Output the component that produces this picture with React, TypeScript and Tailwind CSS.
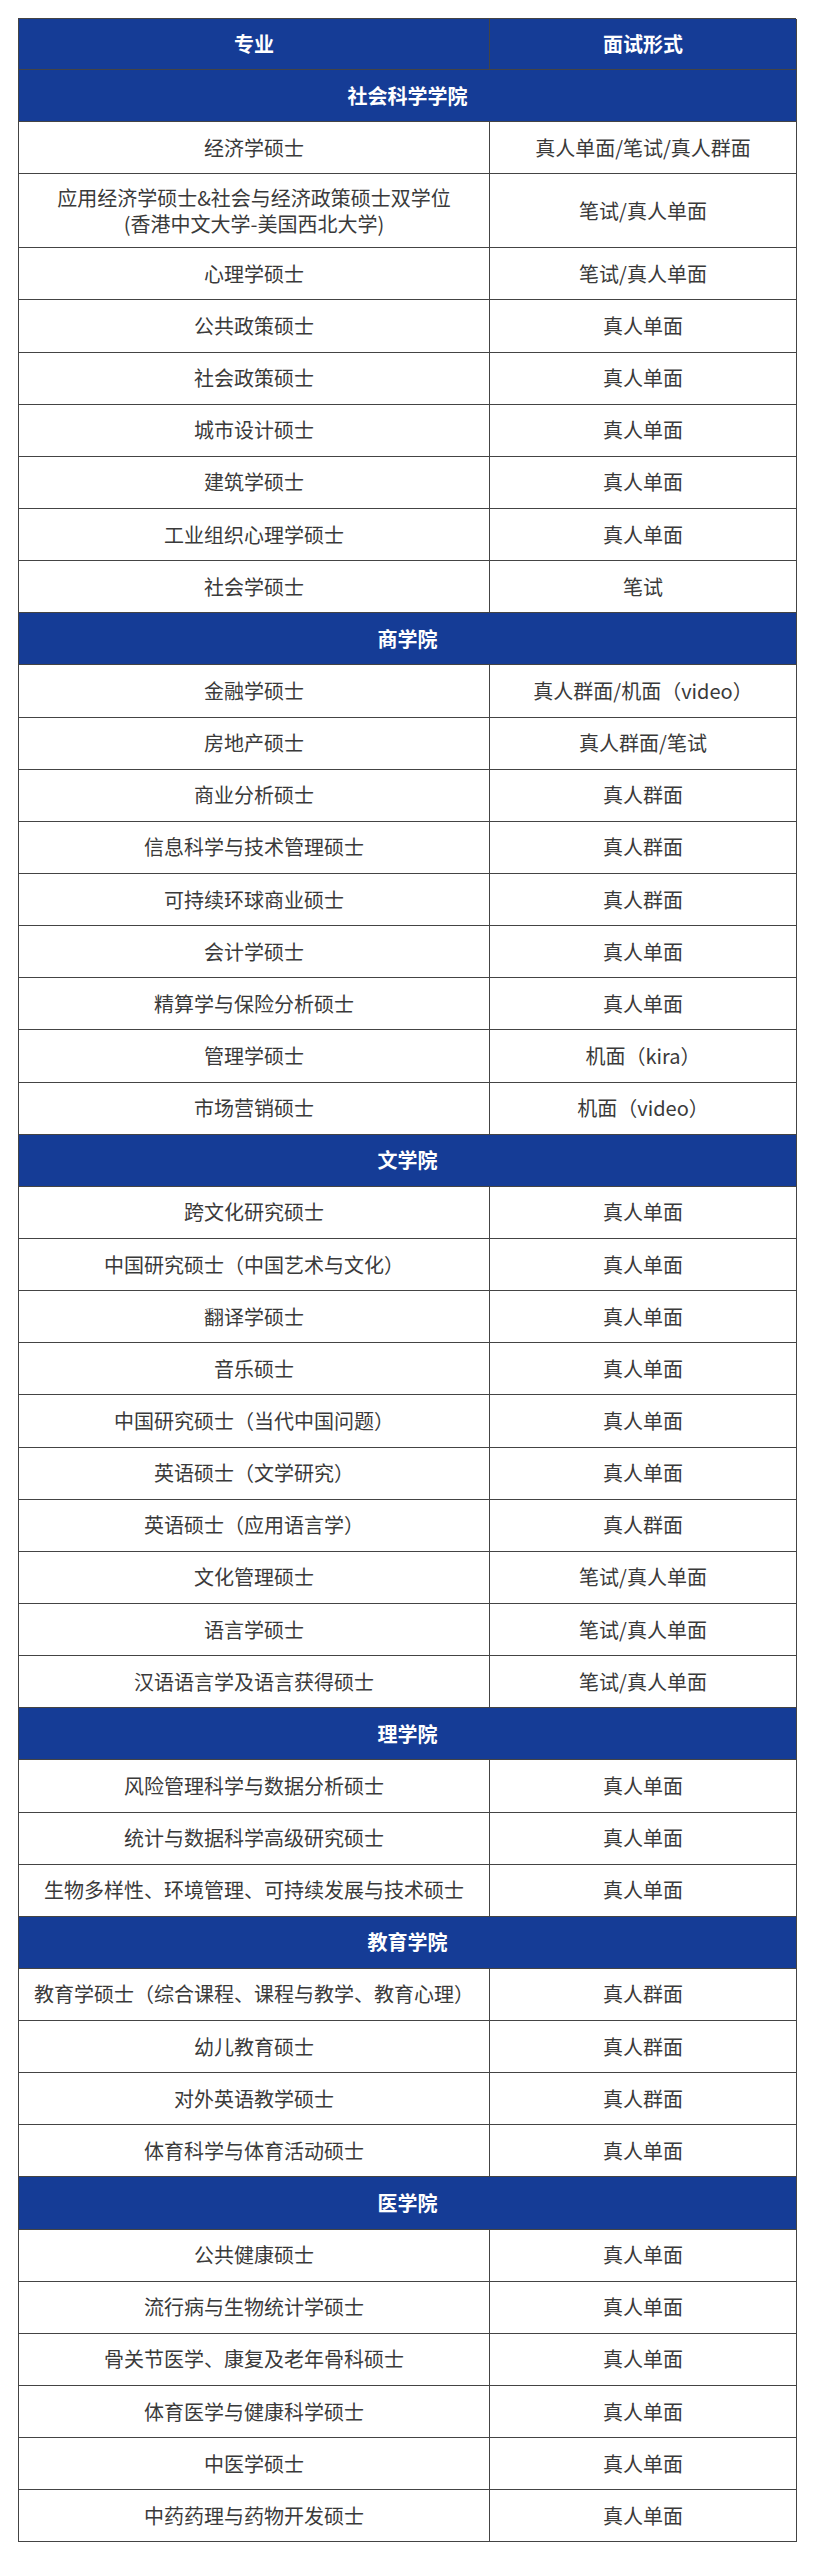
type Row = { major: string; format: string; sub?: string };
type Section = { school: string; rows: Row[] };

const sections: Section[] = [
  {
    school: "社会科学学院",
    rows: [
      { major: "经济学硕士", format: "真人单面/笔试/真人群面" },
      {
        major: "应用经济学硕士&社会与经济政策硕士双学位",
        sub: "(香港中文大学-美国西北大学)",
        format: "笔试/真人单面",
      },
      { major: "心理学硕士", format: "笔试/真人单面" },
      { major: "公共政策硕士", format: "真人单面" },
      { major: "社会政策硕士", format: "真人单面" },
      { major: "城市设计硕士", format: "真人单面" },
      { major: "建筑学硕士", format: "真人单面" },
      { major: "工业组织心理学硕士", format: "真人单面" },
      { major: "社会学硕士", format: "笔试" },
    ],
  },
  {
    school: "商学院",
    rows: [
      { major: "金融学硕士", format: "真人群面/机面（video）" },
      { major: "房地产硕士", format: "真人群面/笔试" },
      { major: "商业分析硕士", format: "真人群面" },
      { major: "信息科学与技术管理硕士", format: "真人群面" },
      { major: "可持续环球商业硕士", format: "真人群面" },
      { major: "会计学硕士", format: "真人单面" },
      { major: "精算学与保险分析硕士", format: "真人单面" },
      { major: "管理学硕士", format: "机面（kira）" },
      { major: "市场营销硕士", format: "机面（video）" },
    ],
  },
  {
    school: "文学院",
    rows: [
      { major: "跨文化研究硕士", format: "真人单面" },
      { major: "中国研究硕士（中国艺术与文化）", format: "真人单面" },
      { major: "翻译学硕士", format: "真人单面" },
      { major: "音乐硕士", format: "真人单面" },
      { major: "中国研究硕士（当代中国问题）", format: "真人单面" },
      { major: "英语硕士（文学研究）", format: "真人单面" },
      { major: "英语硕士（应用语言学）", format: "真人群面" },
      { major: "文化管理硕士", format: "笔试/真人单面" },
      { major: "语言学硕士", format: "笔试/真人单面" },
      { major: "汉语语言学及语言获得硕士", format: "笔试/真人单面" },
    ],
  },
  {
    school: "理学院",
    rows: [
      { major: "风险管理科学与数据分析硕士", format: "真人单面" },
      { major: "统计与数据科学高级研究硕士", format: "真人单面" },
      { major: "生物多样性、环境管理、可持续发展与技术硕士", format: "真人单面" },
    ],
  },
  {
    school: "教育学院",
    rows: [
      { major: "教育学硕士（综合课程、课程与教学、教育心理）", format: "真人群面" },
      { major: "幼儿教育硕士", format: "真人群面" },
      { major: "对外英语教学硕士", format: "真人群面" },
      { major: "体育科学与体育活动硕士", format: "真人单面" },
    ],
  },
  {
    school: "医学院",
    rows: [
      { major: "公共健康硕士", format: "真人单面" },
      { major: "流行病与生物统计学硕士", format: "真人单面" },
      { major: "骨关节医学、康复及老年骨科硕士", format: "真人单面" },
      { major: "体育医学与健康科学硕士", format: "真人单面" },
      { major: "中医学硕士", format: "真人单面" },
      { major: "中药药理与药物开发硕士", format: "真人单面" },
    ],
  },
];

const cell =
  "flex items-center justify-center border-r border-b border-[#444] text-center whitespace-nowrap";

function SchoolRow({ name }: { name: string }) {
  return (
    <div
      className={`${cell} col-span-2 h-[52.15px] bg-[#153c96] font-bold text-white`}
    >
      {name}
    </div>
  );
}

function DataRow({ row }: { row: Row }) {
  const height = row.sub ? "h-[74px]" : "h-[52.15px]";
  return (
    <>
      <div className={`${cell} ${height} flex-col leading-[26px]`}>
        <span>{row.major}</span>
        {row.sub && <span>{row.sub}</span>}
      </div>
      <div className={`${cell} ${height}`}>{row.format}</div>
    </>
  );
}

export default function App() {
  return (
    <div className="min-h-[2560px] bg-white pt-[18px] pl-[18px]">
      <div
        className="grid w-[778px] grid-cols-[471px_307px] border-t border-l border-[#444] text-[20px] text-[#3a3a3a]"
        style={{ fontFamily: '"Noto Sans CJK SC", "Noto Sans", sans-serif' }}
      >
        {/* header */}
        <div className={`${cell} h-[51px] bg-[#153c96] font-bold text-white`}>专业</div>
        <div className={`${cell} h-[51px] bg-[#153c96] font-bold text-white`}>面试形式</div>

        {sections.map((section) => (
          <div key={section.school} className="contents">
            <SchoolRow name={section.school} />
            {section.rows.map((row) => (
              <DataRow key={row.major} row={row} />
            ))}
          </div>
        ))}
      </div>
    </div>
  );
}
